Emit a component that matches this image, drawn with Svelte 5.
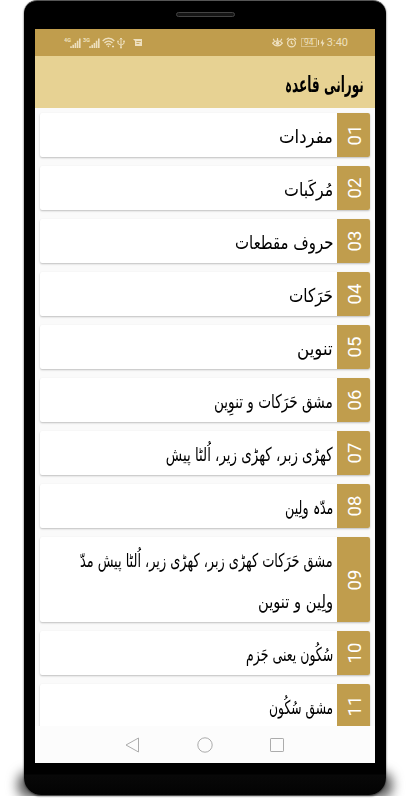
<script lang="ts">
  const chapters = [
    { no: '01', lines: [{ text: 'مفردات', width: 54 }] },
    { no: '02', lines: [{ text: 'مُرکَبات', width: 49 }] },
    { no: '03', lines: [{ text: 'حروف مقطعات', width: 98 }] },
    { no: '04', lines: [{ text: 'حَرَکات', width: 44 }] },
    { no: '05', lines: [{ text: 'تنوین', width: 36 }] },
    { no: '06', lines: [{ text: 'مشق حَرَکات و تنوِین', width: 119 }] },
    { no: '07', lines: [{ text: 'کھڑی زبر، کھڑی زیر، اُلٹا پیش', width: 167 }] },
    { no: '08', lines: [{ text: 'مدّہ ولِین', width: 48 }] },
    {
      no: '09',
      lines: [
        { text: 'مشق حَرَکات کھڑی زبر، کھڑی زیر، اُلٹا پیش مدّ', width: 253 },
        { text: 'ولِین و تنوین', width: 75 },
      ],
    },
    { no: '10', lines: [{ text: 'سُکُون یعنی جَزم', width: 87 }] },
    { no: '11', lines: [{ text: 'مشق سُکُون', width: 64 }] },
  ];

  // squeeze a line of text to the given width
  function fit(node: HTMLElement, width: number) {
    node.style.transform = `scaleX(${width / node.offsetWidth})`;
  }
</script>

{#snippet signal(label: string)}
  <svg class="signal" width="17" height="12" viewBox="0 0 17 12">
    <text x="0" y="5.4">{label}</text>
    <path d="M7 11V9.2M9.2 11V7.8M11.4 11V6M13.6 11V3.8M15.8 11V1.5" stroke="currentColor" stroke-width="1.6" />
  </svg>
{/snippet}

<div class="stage">
  <div class="floor-shadow"></div>
  <div class="phone">
    <div class="speaker"></div>
    <div class="screen">
      <div class="status-bar">
        <div class="status-group">
          {@render signal('4G')}
          <span class="gap"></span>
          {@render signal('3G')}
          <svg class="wifi" width="13" height="11" viewBox="0 0 13 11" fill="none" stroke="currentColor" stroke-width="1.4">
            <path d="M.7 4C4 .4 9 .4 12.3 4M2.5 6.1C5 3.5 8 3.5 10.5 6.1M4.3 8C5.7 6.5 7.3 6.5 8.7 8" />
            <circle cx="6.4" cy="9.4" r=".8" fill="currentColor" stroke="none" />
            <path d="M10 9.5h2" />
          </svg>
          <svg class="usb" width="8" height="12" viewBox="0 0 8 12" fill="none" stroke="currentColor">
            <path d="M4 1v9M1 4v2.5L4 8.2 7 6.5V4M2.8 2.5 4 1l1.2 1.5" />
            <circle cx="4" cy="10.5" r="1" fill="currentColor" stroke="none" />
            <circle cx="1" cy="4.2" r=".8" fill="currentColor" stroke="none" />
            <path d="M6.3 4.2h1.4" stroke-width="1.4" />
          </svg>
          <svg width="9" height="9" viewBox="0 0 9 9">
            <path d="M0 1h9v7H2V3L0 1Z" fill="currentColor" />
            <path d="M3.4 3.5h4.4M3.4 5.5h3" stroke="#c09d4d" stroke-width=".8" />
          </svg>
        </div>
        <div class="status-group right">
          <svg width="11" height="11" viewBox="0 0 11 11" fill="none" stroke="currentColor" stroke-width="1.2">
            <path d="M.6 6.2C3 3 8 3 10.4 6.2 8 9.8 3 9.8.6 6.2ZM5.5 3.5V1M2.4 4 1.2 1.8M8.6 4l1.2-2.2" />
            <circle cx="5.5" cy="6.3" r="1.8" fill="currentColor" stroke="none" />
          </svg>
          <svg class="alarm" width="11" height="11" viewBox="0 0 11 11" fill="none" stroke="currentColor" stroke-width="1.2">
            <circle cx="5.5" cy="6" r="3.9" />
            <path d="M5.3 3.7v2.5L7 7.3M.8 2.6 2.8.9M10.2 2.6 8.2.9" />
          </svg>
          <span class="battery">94</span>
          <svg class="bolt" width="5" height="8" viewBox="0 0 5 8">
            <path d="M3 0 .4 4.4h1.8L1.8 8l2.8-4.6H2.8Z" fill="currentColor" />
          </svg>
          <span class="time">3:40</span>
        </div>
      </div>

      <header dir="rtl">
        <h1 use:fit={79}>نورانی قاعدہ</h1>
      </header>

      <main>
        {#each chapters as chapter}
          <div class="card">
            <div class="lines" dir="rtl">
              {#each chapter.lines as line}
                <div class="line"><span use:fit={line.width}>{line.text}</span></div>
              {/each}
            </div>
            <div class="number"><span>{chapter.no}</span></div>
          </div>
        {/each}
      </main>

      <nav>
        <svg width="160" height="18" viewBox="0 0 160 18" fill="none" stroke="#acacac">
          <path d="M13.5 2v14L1 9Z" />
          <circle cx="80" cy="9" r="7.2" />
          <rect x="145.5" y="2.5" width="13" height="13" rx=".6" />
        </svg>
      </nav>
    </div>
  </div>
</div>

<style>
  :global(body) {
    margin: 0;
    background: #fff;
  }

  .stage {
    position: relative;
    width: 410px;
    height: 800px;
    overflow: hidden;
    background: #fff;
    box-sizing: border-box;
    padding: 0 24px;
  }

  .floor-shadow {
    position: absolute;
    left: 18px;
    right: 18px;
    top: 772px;
    height: 26px;
    border-radius: 10px;
    background: #555;
    filter: blur(6px);
    clip-path: inset(-20px -20px 2px -20px);
  }

  .phone {
    position: relative;
    box-sizing: border-box;
    width: 362px;
    height: 795px;
    padding: 11px 11px 0;
    border-top: 1px solid #555;
    border-radius: 13px 13px 17px 17px;
    background: linear-gradient(#000 773px, #080808 774px, #030303);
    box-shadow: 0 1px 2px #333;
  }

  .speaker {
    box-sizing: border-box;
    width: 59px;
    height: 5px;
    margin: 0 auto 12px;
    border: 1px solid #444;
    border-radius: 3px;
    background: #151515;
  }

  .screen {
    display: flex;
    flex-direction: column;
    height: 734px;
    overflow: hidden;
    background: #fafafa;
  }

  .status-bar {
    display: flex;
    flex: none;
    justify-content: space-between;
    height: 27px;
    box-sizing: border-box;
    padding: 0 27px 0 29px;
    background: #c09d4d;
    color: #eee0bf;
    font-family: Roboto, sans-serif;
  }

  .status-group {
    display: flex;
    align-items: center;
  }

  .signal text {
    font: bold 5.5px Roboto, sans-serif;
    fill: currentColor;
  }

  .gap {
    width: 2px;
  }

  .wifi {
    margin-left: 2px;
  }

  .usb {
    margin: 0 8px 0 2px;
  }

  .alarm {
    margin: 0 4px 0 3px;
  }

  .battery {
    position: relative;
    box-sizing: border-box;
    width: 16px;
    height: 9px;
    border: 1px solid #d8c08a;
    font-size: 8.5px;
    line-height: 7px;
    text-align: center;
  }

  .battery::after {
    content: '';
    position: absolute;
    right: -3px;
    top: 1px;
    width: 1px;
    height: 5px;
    background: #eee0bf;
  }

  .bolt {
    margin: 0 2px 0 3px;
  }

  .time {
    font-size: 11px;
  }

  header {
    flex: none;
    display: flex;
    align-items: center;
    height: 52px;
    box-sizing: border-box;
    padding: 4px 11px 0;
    background: #e7d293;
  }

  h1 {
    margin: 0;
    font: bold 22px 'DejaVu Sans', sans-serif;
    color: #000;
    white-space: nowrap;
    transform-origin: right center;
  }

  main {
    flex: 1;
    min-height: 0;
    overflow: hidden;
    display: flex;
    flex-direction: column;
    gap: 9px;
    padding: 5px 5px 0;
  }

  .card {
    flex: none;
    display: flex;
    border-radius: 2px;
    background: #fff;
    box-shadow: 0 1px 2px rgba(0, 0, 0, 0.24);
  }

  .lines {
    flex: 1;
    min-width: 0;
    padding: 3px 4px 0 0;
  }

  .line {
    height: 41px;
    font-family: 'DejaVu Sans', sans-serif;
    font-size: 19px;
    line-height: 41px;
    color: #000;
    white-space: nowrap;
  }

  .line span {
    display: inline-block;
    transform-origin: right center;
  }

  .number {
    display: flex;
    align-items: center;
    justify-content: center;
    width: 33px;
    box-sizing: border-box;
    padding-left: 3px;
    border-radius: 0 2px 2px 0;
    background: #c09d4d;
    color: #fff;
    font-family: Roboto, sans-serif;
    font-size: 18.5px;
  }

  .number span {
    transform: rotate(-90deg);
  }

  nav {
    flex: none;
    display: flex;
    align-items: center;
    justify-content: center;
    height: 37px;
    background: #fcfcfc;
  }
</style>
